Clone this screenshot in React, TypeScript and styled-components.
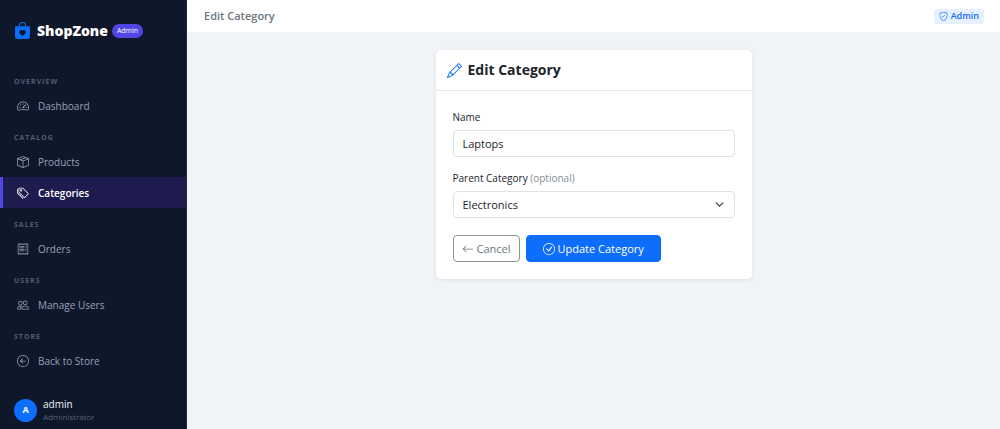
import React from 'react';
import styled, { createGlobalStyle } from 'styled-components';
import {
  BsArrowLeft,
  BsArrowLeftCircle,
  BsBagHeartFill,
  BsBoxSeam,
  BsCheckCircle,
  BsPencil,
  BsPeople,
  BsReceipt,
  BsShieldCheck,
  BsSpeedometer2,
  BsTags,
} from 'react-icons/bs';
import type { IconType } from 'react-icons';

const GlobalStyle = createGlobalStyle`
  *, *::before, *::after { box-sizing: border-box; }
  body {
    margin: 0;
    background: #f0f4f8;
    color: #212529;
    font-family: "Open Sans", "Noto Sans", sans-serif;
    font-size: 11px;
    line-height: 16px;
  }
  button, input, select { font: inherit; }
`;

const Shell = styled.div`
  display: grid;
  grid-template-columns: 187px minmax(0, 1fr);
  height: 100vh;
`;

const Sidebar = styled.aside`
  display: flex;
  flex-direction: column;
  overflow: hidden;
  background: #0f172a;
  border-right: 1px solid #1e2940;
`;

const Brand = styled.a`
  display: flex;
  align-items: center;
  flex: none;
  height: 61px;
  padding: 0 14px;
  color: #fff;
  font-size: 14px;
  font-weight: 800;
  line-height: 20px;
  text-decoration: none;

  svg {
    width: 17px;
    height: 17px;
    margin-right: 6px;
    color: #0d6efd;
  }
`;

const BrandTag = styled.span`
  margin-left: 4px;
  padding: 0 5px;
  border-radius: 7px;
  background: #4f46e5;
  font-size: 7px;
  font-weight: 500;
  line-height: 14px;
`;

const Nav = styled.nav`
  padding-top: 4px;
`;

const SectionLabel = styled.h2`
  margin: 0;
  padding: 11px 14px 2px;
  color: #4f5d73;
  font-size: 7px;
  font-weight: 700;
  line-height: 12px;
  letter-spacing: 1px;
  text-transform: uppercase;
`;

const NavLink = styled.a<{ $active?: boolean }>`
  display: flex;
  align-items: center;
  gap: 9px;
  height: 31px;
  padding: 0 14px;
  border-left: 3px solid ${(p) => (p.$active ? '#4f46e5' : 'transparent')};
  background: ${(p) => (p.$active ? '#1e1b4f' : 'transparent')};
  color: ${(p) => (p.$active ? '#fff' : '#94a3b8')};
  font-size: 10px;
  font-weight: ${(p) => (p.$active ? 600 : 500)};
  text-decoration: none;

  svg {
    width: 12px;
    height: 12px;
  }
`;

const Account = styled.footer`
  display: flex;
  align-items: center;
  gap: 6px;
  flex: none;
  margin-top: 17px;
  padding: 4px 14px;
`;

const Avatar = styled.span`
  display: grid;
  place-items: center;
  width: 23px;
  height: 23px;
  border-radius: 50%;
  background: #0d6efd;
  color: #fff;
  font-size: 9px;
  font-weight: 700;
`;

const AccountText = styled.div`
  display: flex;
  flex-direction: column;
`;

const AccountName = styled.span`
  color: #f1f5f9;
  font-size: 10px;
  font-weight: 500;
  line-height: 14px;
`;

const AccountRole = styled.span`
  color: #566479;
  font-size: 8px;
  line-height: 12px;
`;

const Content = styled.div`
  display: flex;
  flex-direction: column;
`;

const TopBar = styled.header`
  display: flex;
  align-items: center;
  justify-content: space-between;
  height: 32px;
  padding: 0 16px 0 17px;
  background: #fff;
`;

const PageTitle = styled.span`
  color: #6c757d;
  font-size: 11px;
  font-weight: 600;
`;

const RoleBadge = styled.span`
  display: flex;
  align-items: center;
  gap: 3px;
  height: 15px;
  padding: 0 5px;
  border-radius: 3px;
  background: #e7f0ff;
  color: #0d6efd;
  font-size: 9px;
  font-weight: 600;

  svg {
    width: 9px;
    height: 9px;
  }
`;

const Main = styled.main`
  display: flex;
  justify-content: center;
  padding: 18px 17px;
`;

const Card = styled.section`
  width: 100%;
  max-width: 316px;
  border-radius: 5px;
  background: #fff;
  box-shadow: 0 1px 4px rgba(15, 23, 42, 0.08);
`;

const CardHeader = styled.header`
  display: flex;
  align-items: center;
  gap: 6px;
  padding: 10px 11px;
  border-bottom: 1px solid #e3e6ea;

  svg {
    width: 15px;
    height: 15px;
    color: #0d6efd;
  }
`;

const CardTitle = styled.h1`
  margin: 0;
  font-size: 14px;
  font-weight: 700;
  line-height: 20px;
`;

const Form = styled.form`
  display: flex;
  flex-direction: column;
  gap: 17px;
  padding: 18px 17px 17px;
`;

const Fields = styled.div`
  display: flex;
  flex-direction: column;
  gap: 13px;
`;

const Field = styled.div`
  display: flex;
  flex-direction: column;
  gap: 5px;
`;

const Label = styled.label`
  color: #212529;
  font-size: 10px;
`;

const Hint = styled.span`
  color: #858c94;
`;

const controlStyle = `
  width: 100%;
  height: 27px;
  padding: 0 9px;
  border: 1px solid #dee2e6;
  border-radius: 4px;
  background: #fff;
  color: #212529;
  font-size: 11px;
`;

const TextInput = styled.input`
  ${controlStyle}
`;

const SelectWrap = styled.div`
  display: grid;
  align-items: center;

  > * { grid-area: 1 / 1; }

  svg {
    justify-self: end;
    width: 9px;
    height: 9px;
    margin-right: 11px;
    pointer-events: none;
  }
`;

const Select = styled.select`
  ${controlStyle}
  appearance: none;
`;

const Actions = styled.div`
  display: flex;
  gap: 6px;
`;

const Button = styled.button<{ $primary?: boolean }>`
  display: flex;
  align-items: center;
  justify-content: center;
  gap: 3px;
  height: 27px;
  padding: 0 ${(p) => (p.$primary ? 16 : 8)}px;
  border: 1px solid ${(p) => (p.$primary ? '#0d6efd' : '#8d949b')};
  border-radius: 4px;
  background: ${(p) => (p.$primary ? '#0d6efd' : '#fff')};
  color: ${(p) => (p.$primary ? '#fff' : '#6c757d')};
  font-size: 11px;

  svg {
    width: 12px;
    height: 12px;
  }
`;

const sections: { title: string; links: { label: string; Icon: IconType; active?: boolean }[] }[] = [
  { title: 'Overview', links: [{ label: 'Dashboard', Icon: BsSpeedometer2 }] },
  {
    title: 'Catalog',
    links: [
      { label: 'Products', Icon: BsBoxSeam },
      { label: 'Categories', Icon: BsTags, active: true },
    ],
  },
  { title: 'Sales', links: [{ label: 'Orders', Icon: BsReceipt }] },
  { title: 'Users', links: [{ label: 'Manage Users', Icon: BsPeople }] },
  { title: 'Store', links: [{ label: 'Back to Store', Icon: BsArrowLeftCircle }] },
];

export default function App() {
  return (
    <>
      <GlobalStyle />
      <Shell>
        <Sidebar>
          <Brand href="#">
            <BsBagHeartFill />
            ShopZone
            <BrandTag>Admin</BrandTag>
          </Brand>
          <Nav>
            {sections.map((section) => (
              <React.Fragment key={section.title}>
                <SectionLabel>{section.title}</SectionLabel>
                {section.links.map(({ label, Icon, active }) => (
                  <NavLink key={label} href="#" $active={active} aria-current={active ? 'page' : undefined}>
                    <Icon />
                    {label}
                  </NavLink>
                ))}
              </React.Fragment>
            ))}
          </Nav>
          <Account>
            <Avatar>A</Avatar>
            <AccountText>
              <AccountName>admin</AccountName>
              <AccountRole>Administrator</AccountRole>
            </AccountText>
          </Account>
        </Sidebar>
        <Content>
          <TopBar>
            <PageTitle>Edit Category</PageTitle>
            <RoleBadge>
              <BsShieldCheck />
              Admin
            </RoleBadge>
          </TopBar>
          <Main>
            <Card>
              <CardHeader>
                <BsPencil />
                <CardTitle>Edit Category</CardTitle>
              </CardHeader>
              <Form onSubmit={(e) => e.preventDefault()}>
                <Fields>
                  <Field>
                    <Label htmlFor="name">Name</Label>
                    <TextInput id="name" defaultValue="Laptops" />
                  </Field>
                  <Field>
                    <Label htmlFor="parent">
                      Parent Category <Hint>(optional)</Hint>
                    </Label>
                    <SelectWrap>
                      <Select id="parent" defaultValue="Electronics">
                        <option>Electronics</option>
                      </Select>
                      <svg viewBox="0 0 16 16" fill="none" stroke="#343a40" strokeWidth="2" strokeLinecap="round" strokeLinejoin="round">
                        <path d="m2 5 6 6 6-6" />
                      </svg>
                    </SelectWrap>
                  </Field>
                </Fields>
                <Actions>
                  <Button type="button">
                    <BsArrowLeft />
                    Cancel
                  </Button>
                  <Button type="submit" $primary>
                    <BsCheckCircle />
                    Update Category
                  </Button>
                </Actions>
              </Form>
            </Card>
          </Main>
        </Content>
      </Shell>
    </>
  );
}
